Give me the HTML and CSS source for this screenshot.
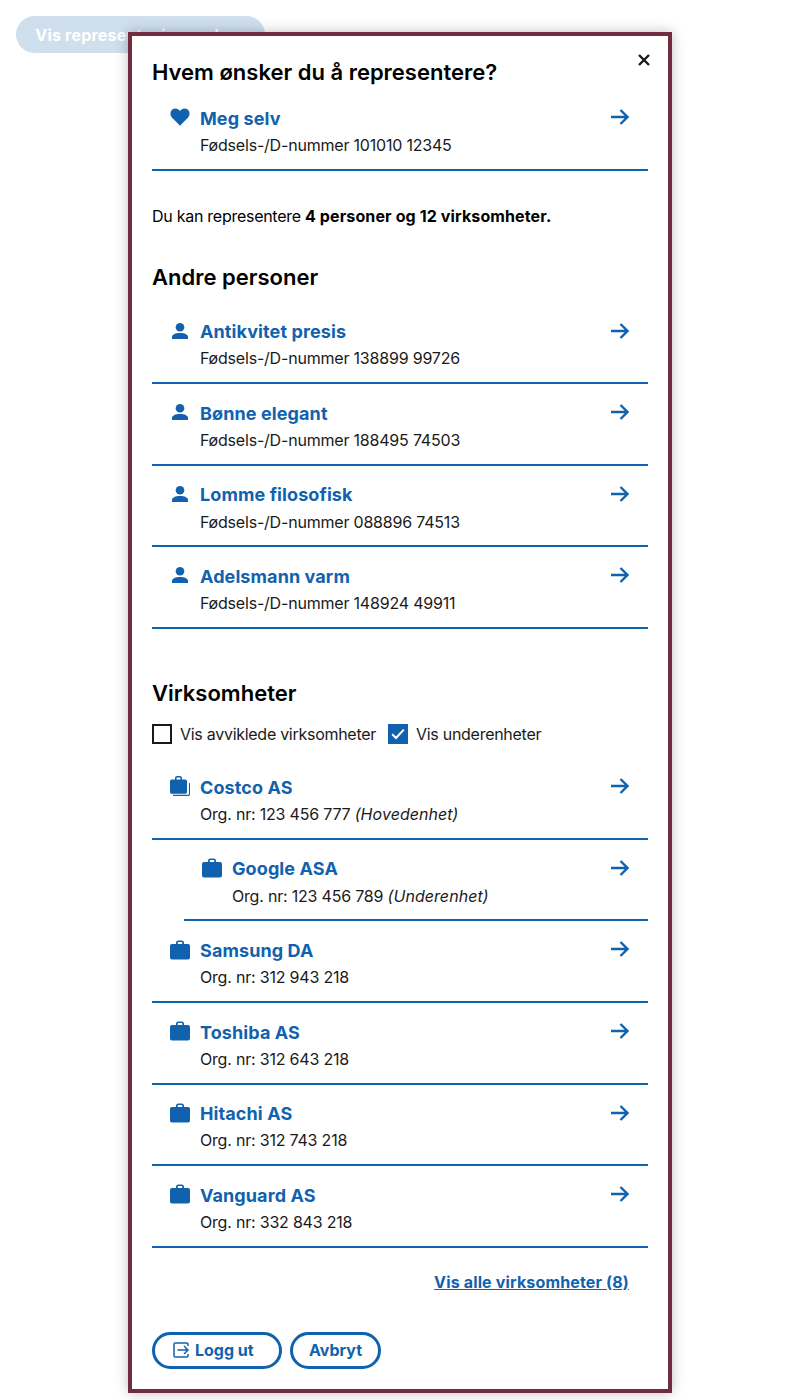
FILE: index.html
```html
<!DOCTYPE html>
<html lang="no">
<head>
    <meta charset="utf-8">
    <title>Representasjon</title>
    <link rel="stylesheet" href="styles.css">
</head>
<body>
    <svg class="defs" width="0" height="0">
        <symbol id="arrow" viewBox="0 0 18 16"><path d="M0 8H16.5M9.5 1L16.5 8L9.5 15" fill="none" stroke="currentColor" stroke-width="2.4"/></symbol>
        <symbol id="heart" viewBox="0 0 22 20"><path d="M11 19.5L2.6 11.2C-.4 8.2 0 3.6 3 1.6 5.8-.2 9.2.7 11 3.4 12.8.7 16.2-.2 19 1.6 22 3.6 22.4 8.2 19.4 11.2Z" fill="currentColor"/></symbol>
        <symbol id="person" viewBox="0 0 16 16"><circle cx="8" cy="4.3" r="4.3" fill="currentColor"/><path d="M0 16V14C0 11.5 3.5 10 8 10S16 11.5 16 14V16Z" fill="currentColor"/></symbol>
        <symbol id="case" viewBox="0 0 20 19"><path d="M6 4.5V2.2C6 1 7 0 8.2 0H11.8C13 0 14 1 14 2.2V4.5H12.3V2.4C12.3 1.9 12 1.6 11.5 1.6H8.5C8 1.6 7.7 1.9 7.7 2.4V4.5Z M2 3.5H18C19.1 3.5 20 4.4 20 5.5V17C20 18.1 19.1 19 18 19H2C.9 19 0 18.1 0 17V5.5C0 4.4 .9 3.5 2 3.5Z" fill="currentColor"/></symbol>
    </svg>

    <button class="open-button">Vis representasjonsvelger</button>

    <div class="modal">
        <button class="close" aria-label="Lukk">
            <svg width="12" height="12" viewBox="0 0 12 12"><path d="M1 1L11 11M11 1L1 11" stroke="#1a1a1a" stroke-width="2.4"/></svg>
        </button>
        <h2 class="modal-title">Hvem ønsker du å representere?</h2>

        <a class="row self">
            <svg class="icon heart"><use href="#heart"/></svg>
            <div class="row-text">
                <span class="name">Meg selv</span>
                <span class="sub">Fødsels-/D-nummer 101010 12345</span>
            </div>
            <svg class="arrow"><use href="#arrow"/></svg>
        </a>

        <p class="summary">Du kan representere <strong>4 personer og 12 virksomheter.</strong></p>

        <h2 class="section-title">Andre personer</h2>
        <div class="list">
            <a class="row">
                <svg class="icon person"><use href="#person"/></svg>
                <div class="row-text">
                    <span class="name">Antikvitet presis</span>
                    <span class="sub">Fødsels-/D-nummer 138899 99726</span>
                </div>
                <svg class="arrow"><use href="#arrow"/></svg>
            </a>
            <a class="row">
                <svg class="icon person"><use href="#person"/></svg>
                <div class="row-text">
                    <span class="name">Bønne elegant</span>
                    <span class="sub">Fødsels-/D-nummer 188495 74503</span>
                </div>
                <svg class="arrow"><use href="#arrow"/></svg>
            </a>
            <a class="row">
                <svg class="icon person"><use href="#person"/></svg>
                <div class="row-text">
                    <span class="name">Lomme filosofisk</span>
                    <span class="sub">Fødsels-/D-nummer 088896 74513</span>
                </div>
                <svg class="arrow"><use href="#arrow"/></svg>
            </a>
            <a class="row">
                <svg class="icon person"><use href="#person"/></svg>
                <div class="row-text">
                    <span class="name">Adelsmann varm</span>
                    <span class="sub">Fødsels-/D-nummer 148924 49911</span>
                </div>
                <svg class="arrow"><use href="#arrow"/></svg>
            </a>
        </div>

        <h2 class="section-title companies">Virksomheter</h2>
        <div class="filters">
            <label class="filter"><span class="box"></span>Vis avviklede virksomheter</label>
            <label class="filter">
                <span class="box checked">
                    <svg width="14" height="12" viewBox="0 0 14 12"><path d="M1.2 6.2L5 10L12.8 1.6" fill="none" stroke="#fff" stroke-width="2"/></svg>
                </span>Vis underenheter
            </label>
        </div>
        <div class="list">
            <a class="row">
                <svg class="icon stack" viewBox="0 0 20 20">
                    <path d="M3 19.4H18.2C19 19.4 19.5 18.9 19.5 18.1V7" fill="none" stroke="currentColor" stroke-width="1.1"/>
                    <path d="M5 4.5V2C5 .9 5.9 0 7 0H10C11.1 0 12 .9 12 2V4.5H10.5V2.2C10.5 1.8 10.2 1.5 9.8 1.5H7.2C6.8 1.5 6.5 1.8 6.5 2.2V4.5Z M1.8 3.5H15.2C16.2 3.5 17 4.3 17 5.3V16C17 17 16.2 17.8 15.2 17.8H1.8C.8 17.8 0 17 0 16V5.3C0 4.3 .8 3.5 1.8 3.5Z" fill="currentColor"/>
                </svg>
                <div class="row-text">
                    <span class="name">Costco AS</span>
                    <span class="sub">Org. nr: 123 456 777 <em>(Hovedenhet)</em></span>
                </div>
                <svg class="arrow"><use href="#arrow"/></svg>
            </a>
            <a class="row child">
                <svg class="icon case"><use href="#case"/></svg>
                <div class="row-text">
                    <span class="name">Google ASA</span>
                    <span class="sub">Org. nr: 123 456 789 <em>(Underenhet)</em></span>
                </div>
                <svg class="arrow"><use href="#arrow"/></svg>
            </a>
            <a class="row">
                <svg class="icon case"><use href="#case"/></svg>
                <div class="row-text">
                    <span class="name">Samsung DA</span>
                    <span class="sub">Org. nr: 312 943 218</span>
                </div>
                <svg class="arrow"><use href="#arrow"/></svg>
            </a>
            <a class="row">
                <svg class="icon case"><use href="#case"/></svg>
                <div class="row-text">
                    <span class="name">Toshiba AS</span>
                    <span class="sub">Org. nr: 312 643 218</span>
                </div>
                <svg class="arrow"><use href="#arrow"/></svg>
            </a>
            <a class="row">
                <svg class="icon case"><use href="#case"/></svg>
                <div class="row-text">
                    <span class="name">Hitachi AS</span>
                    <span class="sub">Org. nr: 312 743 218</span>
                </div>
                <svg class="arrow"><use href="#arrow"/></svg>
            </a>
            <a class="row">
                <svg class="icon case"><use href="#case"/></svg>
                <div class="row-text">
                    <span class="name">Vanguard AS</span>
                    <span class="sub">Org. nr: 332 843 218</span>
                </div>
                <svg class="arrow"><use href="#arrow"/></svg>
            </a>
        </div>

        <div class="show-all"><a href="#">Vis alle virksomheter (8)</a></div>

        <div class="actions">
            <button class="pill logout">
                <svg width="16" height="16" viewBox="0 0 16 16"><path d="M15 4V2.2C15 1.5 14.5 1 13.8 1H2.2C1.5 1 1 1.5 1 2.2V13.8C1 14.5 1.5 15 2.2 15H13.8C14.5 15 15 14.5 15 13.8V12M4.5 8H15M11 4L15 8L11 12" fill="none" stroke="currentColor" stroke-width="1.5"/></svg>
                Logg ut
            </button>
            <button class="pill">Avbryt</button>
        </div>
    </div>
</body>
</html>
```

FILE: styles.css
```css
body {
    margin: 0;
    height: 1400px;
    overflow: hidden;
    background-color: #fff;
    font-family: Inter, "Liberation Sans", sans-serif;
    font-size: 16px;
    color: #1a1a1a;
}

.defs {
    display: block;
    height: 0;
}

.open-button {
    display: block;
    margin: 16px 0 0 16px;
    width: 249px;
    height: 37px;
    padding: 0;
    border: none;
    border-radius: 19px;
    background-color: #cfdfee;
    color: #fff;
    font-family: inherit;
    font-size: 16px;
    font-weight: 700;
    letter-spacing: 0.2px;
}

.modal {
    position: absolute;
    top: 32px;
    left: 128px;
    box-sizing: border-box;
    width: 544px;
    height: 1361px;
    padding: 20px 20px 0;
    border: 4px solid #722c40;
    background-color: #fff;
    box-shadow: 0 0 12px rgba(0, 0, 0, 0.25);
}

.close {
    position: absolute;
    top: 18px;
    right: 18px;
    padding: 0;
    border: none;
    background: none;
    line-height: 0;
}

h2 {
    margin: 0;
    color: #000;
    font-size: 22px;
    font-weight: 600;
    line-height: 33px;
}

.row {
    display: flex;
    align-items: flex-start;
    padding: 15.7px 19px 9.7px 18px;
    border-bottom: 2px solid #1162ae;
    color: #1162ae;
}

.row.self {
    padding-top: 16px;
    padding-bottom: 9.4px;
}

.row.child {
    margin-left: 32px;
}

.icon {
    flex: none;
    display: block;
    margin-top: 2.5px;
    margin-right: 10px;
    width: 20px;
    height: 20px;
}

.icon.heart {
    margin-top: 2px;
}

.icon.person {
    margin: 4.3px 12px 0 2px;
    width: 16px;
    height: 16px;
}

.row-text {
    flex: 1;
    display: flex;
    flex-direction: column;
}

.name {
    font-size: 18px;
    font-weight: 700;
    line-height: 27.2px;
    letter-spacing: 0.1px;
}

.sub {
    color: #1a1a1a;
    font-size: 16px;
    line-height: 27px;
    letter-spacing: -0.2px;
}

.sub em {
    letter-spacing: 0.05px;
}

.arrow {
    flex: none;
    display: block;
    margin-top: 4.3px;
    width: 18px;
    height: 16px;
}

.summary {
    margin: 33px 0 0;
    color: #000;
    line-height: 24px;
    letter-spacing: -0.27px;
}

.summary strong {
    letter-spacing: 0.12px;
}

.section-title {
    margin-top: 33px;
}

.section-title + .list {
    margin-top: 9px;
}

.companies {
    margin-top: 48px;
}

.filters {
    display: flex;
    gap: 12px;
    margin-top: 12px;
    margin-bottom: 12.3px;
}

.filter {
    display: flex;
    align-items: center;
    gap: 8px;
    line-height: 24px;
    letter-spacing: -0.28px;
}

.box {
    box-sizing: border-box;
    display: flex;
    align-items: center;
    justify-content: center;
    width: 20px;
    height: 20px;
    border: 2px solid #1a1a1a;
}

.box.checked {
    border: none;
    background-color: #1162ae;
}

.show-all {
    margin-top: 22px;
    padding-right: 19px;
    text-align: right;
    line-height: 24px;
}

.show-all a {
    color: #1162ae;
    font-weight: 700;
    letter-spacing: 0.15px;
}

.actions {
    display: flex;
    gap: 8px;
    margin-top: 38px;
}

.pill {
    display: flex;
    align-items: center;
    justify-content: center;
    gap: 6px;
    box-sizing: border-box;
    height: 37px;
    padding: 0 16px;
    border: 3px solid #1162ae;
    border-radius: 19px;
    background-color: #fff;
    color: #1162ae;
    font-family: inherit;
    font-size: 16px;
    font-weight: 700;
}

.logout {
    justify-content: flex-start;
    width: 130px;
    padding-left: 18px;
}
```
